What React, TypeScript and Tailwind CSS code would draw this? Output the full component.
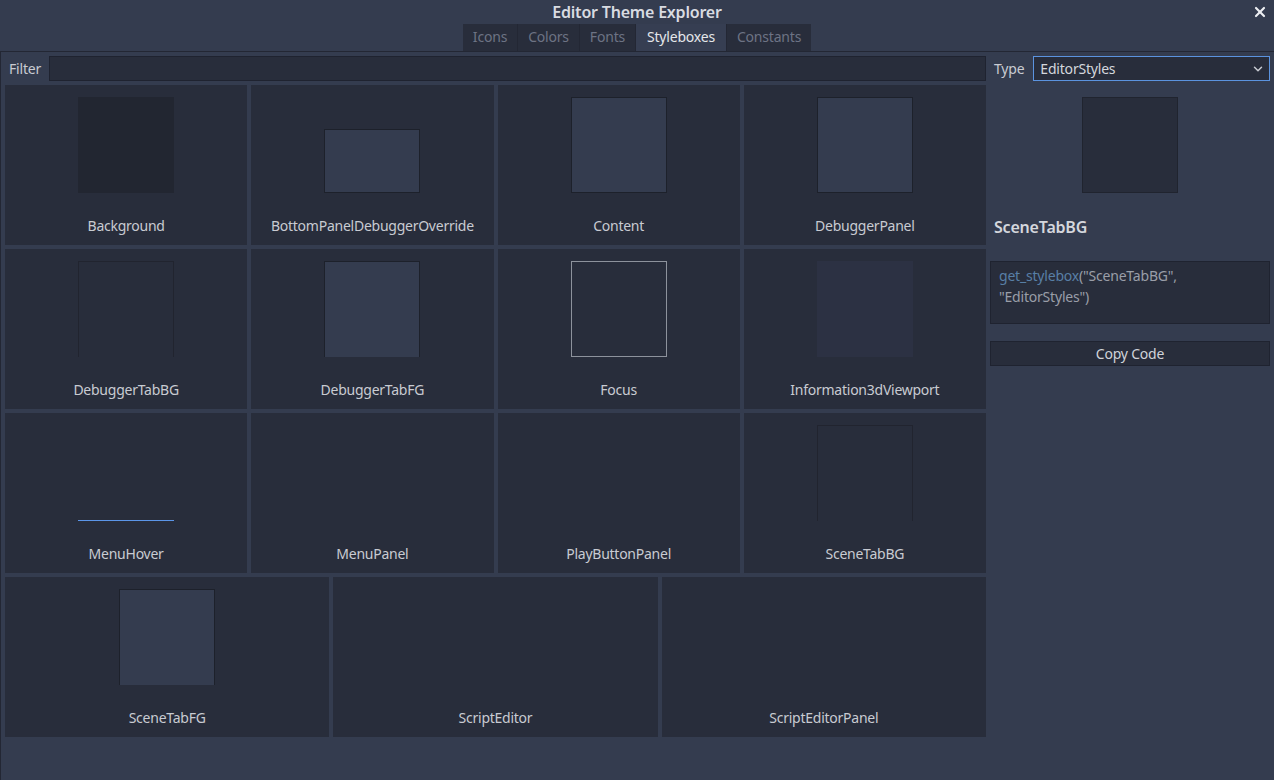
import { X, ChevronDown } from "lucide-react";

type Box = "bg" | "raised" | "raisedShort" | "tabOpen" | "tabFg" | "focus" | "viewport" | "hover" | "none";

const rows: { name: string; box: Box }[][] = [
  [
    { name: "Background", box: "bg" },
    { name: "BottomPanelDebuggerOverride", box: "raisedShort" },
    { name: "Content", box: "raised" },
    { name: "DebuggerPanel", box: "raised" },
  ],
  [
    { name: "DebuggerTabBG", box: "tabOpen" },
    { name: "DebuggerTabFG", box: "tabFg" },
    { name: "Focus", box: "focus" },
    { name: "Information3dViewport", box: "viewport" },
  ],
  [
    { name: "MenuHover", box: "hover" },
    { name: "MenuPanel", box: "none" },
    { name: "PlayButtonPanel", box: "none" },
    { name: "SceneTabBG", box: "tabOpen" },
  ],
];

const lastRow: { name: string; box: Box }[] = [
  { name: "SceneTabFG", box: "tabFg" },
  { name: "ScriptEditor", box: "none" },
  { name: "ScriptEditorPanel", box: "none" },
];

const tabs = ["Icons", "Colors", "Fonts", "Styleboxes", "Constants"];

function Preview({ box }: { box: Box }) {
  switch (box) {
    case "bg":
      return <div className="w-[96px] h-[96px] bg-[#222631]" />;
    case "raised":
      return <div className="w-[96px] h-[96px] bg-[#343c4f] border border-[#1d212b]" />;
    case "raisedShort":
      return <div className="w-[96px] h-[64px] bg-[#343c4f] border border-[#1d212b]" />;
    case "tabOpen":
      return <div className="w-[96px] h-[96px] border-x border-t border-[#21242f]" />;
    case "tabFg":
      return <div className="w-[96px] h-[96px] bg-[#343c4f] border-x border-t border-[#1d212b]" />;
    case "focus":
      return <div className="w-[96px] h-[96px] border border-[#8d929c]" />;
    case "viewport":
      return <div className="w-[96px] h-[96px] bg-[#2c3143]" />;
    case "hover":
      return <div className="w-[96px] h-[96px] border-b border-[#5b95e8]" />;
    default:
      return <div className="w-[96px] h-[96px]" />;
  }
}

function Cell({ name, box }: { name: string; box: Box }) {
  return (
    <div className="h-[160px] bg-[#282d3b] flex flex-col items-center pt-[12px]">
      <div className="h-[96px] flex items-end">
        <Preview box={box} />
      </div>
      <div className="mt-[23px] text-[14px] leading-[20px] tracking-[-0.25px] text-[#c8cbd2]">{name}</div>
    </div>
  );
}

export default function App() {
  return (
    <div
      className="w-full h-screen bg-[#343c4f] flex flex-col overflow-hidden"
      style={{ fontFamily: '"Noto Sans", sans-serif' }}
    >
      <div className="relative h-[24px] flex items-center justify-center">
        <span className="text-[16px] font-semibold text-[#d8dbe1] leading-none tracking-[-0.2px]">Editor Theme Explorer</span>
        <button className="absolute right-[6px] top-[4px] text-[#eceef2]">
          <X size={16} strokeWidth={3.2} />
        </button>
      </div>

      <div className="h-[28px] flex justify-center border-b border-[#232734]">
        <div className="flex gap-px bg-[#232734] h-[27px]">
          {tabs.map((t) => (
            <div
              key={t}
              className={
                t === "Styleboxes"
                  ? "px-[11px] pb-[2px] flex items-center bg-[#363e52] text-[14px] tracking-[-0.2px] text-[#e4e6ea]"
                  : "px-[10px] pb-[2px] flex items-center bg-[#282d3b] text-[14px] tracking-[-0.2px] text-[#6d7384]"
              }
            >
              {t}
            </div>
          ))}
        </div>
      </div>

      <div className="flex-1 flex gap-[4px] border-l border-[#232734] pl-[4px] pr-[4px] pt-[4px]">
        <div className="w-[981px] flex flex-col gap-[4px]">
          <div className="h-[25px] flex items-center gap-[8px]">
            <span className="pl-[4px] text-[14px] tracking-[-0.2px] text-[#c8cbd2]">Filter</span>
            <div className="flex-1 h-[25px] bg-[#282d3b] border border-[#1f2330]" />
          </div>
          {rows.map((row, i) => (
            <div key={i} className="grid grid-cols-4 gap-[4px]">
              {row.map((c) => (
                <Cell key={c.name} name={c.name} box={c.box} />
              ))}
            </div>
          ))}
          <div className="grid grid-cols-3 gap-[4px]">
            {lastRow.map((c) => (
              <Cell key={c.name} name={c.name} box={c.box} />
            ))}
          </div>
        </div>

        <div className="flex-1 flex flex-col">
          <div className="h-[25px] flex items-center gap-[9px]">
            <span className="pl-[4px] text-[14px] tracking-[-0.2px] text-[#c8cbd2]">Type</span>
            <div className="flex-1 h-[25px] bg-[#282d3b] border border-[#5b93df] flex items-center justify-between pl-[6px] pr-[4px]">
              <span className="text-[14px] tracking-[-0.2px] text-[#d4d7dd]">EditorStyles</span>
              <ChevronDown size={14} strokeWidth={2.5} className="text-[#c8cbd2]" />
            </div>
          </div>
          <div className="flex justify-center mt-[16px]">
            <div className="w-[96px] h-[96px] bg-[#282d3b] border border-[#20242f]" />
          </div>
          <div className="mt-[24px] pl-[4px] text-[16px] font-semibold text-[#d4d7dd] leading-[20px] tracking-[-0.2px]">SceneTabBG</div>
          <div className="mt-[24px] h-[63px] bg-[#282d3b] border border-[#1f2330] px-[8px] pt-[3px] text-[14px] leading-[21px] tracking-[-0.2px] text-[#9a9ea8]">
            <span className="text-[#587fa6]">get_stylebox</span>("SceneTabBG",
            <br />
            "EditorStyles")
          </div>
          <button className="mt-[17px] h-[25px] bg-[#282d3b] border border-[#1f2330] text-[14px] tracking-[-0.2px] text-[#d0d3d9]">
            Copy Code
          </button>
        </div>
      </div>
    </div>
  );
}
